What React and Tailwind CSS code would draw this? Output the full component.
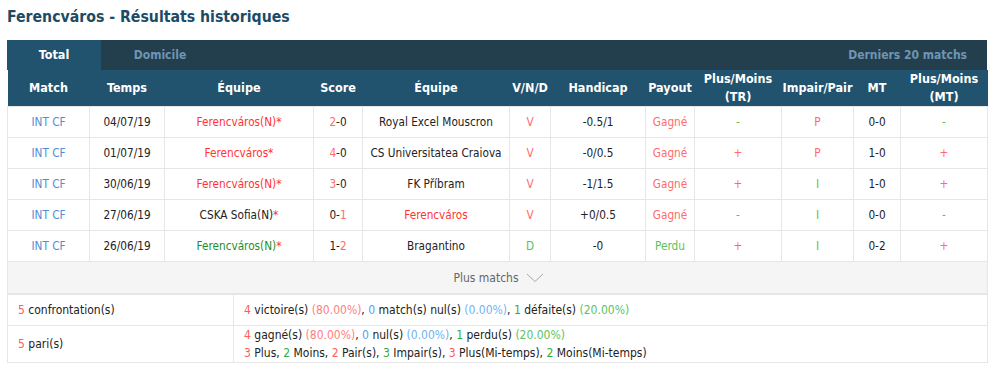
import React from "react";

const R = "text-[#ff3333]";
const RL = "text-[#ff6b6b]";
const G = "text-[#5cc15c]";
const GD = "text-[#1f8f1f]";
const B = "text-[#4f8fd8]";

const cols = [82, 75, 149, 49, 147, 41, 95, 49, 87, 72, 47, 87];

const rows = [
  {
    date: "04/07/19",
    home: <span className={R}>Ferencváros(N)*</span>,
    score: <><span className={RL}>2</span>-0</>,
    away: <span>Royal Excel Mouscron</span>,
    res: <span className={RL}>V</span>,
    hc: "-0.5/1",
    pay: <span className={RL}>Gagné</span>,
    ou: <span className={G}>-</span>,
    op: <span className={RL}>P</span>,
    mt: "0-0",
    oumt: <span className={G}>-</span>,
  },
  {
    date: "01/07/19",
    home: <span className={R}>Ferencváros*</span>,
    score: <><span className={RL}>4</span>-0</>,
    away: <span>CS Universitatea Craiova</span>,
    res: <span className={RL}>V</span>,
    hc: "-0/0.5",
    pay: <span className={RL}>Gagné</span>,
    ou: <span className={RL}>+</span>,
    op: <span className={RL}>P</span>,
    mt: "1-0",
    oumt: <span className={RL}>+</span>,
  },
  {
    date: "30/06/19",
    home: <span className={R}>Ferencváros(N)*</span>,
    score: <><span className={RL}>3</span>-0</>,
    away: <span>FK Příbram</span>,
    res: <span className={RL}>V</span>,
    hc: "-1/1.5",
    pay: <span className={RL}>Gagné</span>,
    ou: <span className={RL}>+</span>,
    op: <span className={G}>I</span>,
    mt: "1-0",
    oumt: <span className={RL}>+</span>,
  },
  {
    date: "27/06/19",
    home: <span>CSKA Sofia(N)<span className={R}>*</span></span>,
    score: <>0-<span className={RL}>1</span></>,
    away: <span className={R}>Ferencváros</span>,
    res: <span className={RL}>V</span>,
    hc: "+0/0.5",
    pay: <span className={RL}>Gagné</span>,
    ou: <span className={G}>-</span>,
    op: <span className={G}>I</span>,
    mt: "0-0",
    oumt: <span className={G}>-</span>,
  },
  {
    date: "26/06/19",
    home: <span className={GD}>Ferencváros(N)<span className={R}>*</span></span>,
    score: <>1-<span className={RL}>2</span></>,
    away: <span>Bragantino</span>,
    res: <span className={G}>D</span>,
    hc: "-0",
    pay: <span className={G}>Perdu</span>,
    ou: <span className={RL}>+</span>,
    op: <span className={G}>I</span>,
    mt: "0-2",
    oumt: <span className={RL}>+</span>,
  },
];

const headers = [
  "Match",
  "Temps",
  "Équipe",
  "Score",
  "Équipe",
  "V/N/D",
  "Handicap",
  "Payout",
  <>Plus/Moins<br />(TR)</>,
  "Impair/Pair",
  "MT",
  <>Plus/Moins<br />(MT)</>,
];

export default function App() {
  return (
    <div
      className="w-[995px] h-[371px] bg-white text-[#222] overflow-hidden"
      style={{ fontFamily: "'DejaVu Sans Condensed', 'DejaVu Sans', sans-serif" }}
    >
      <div className="h-[40px] pl-[7px] pt-[6px]">
        <h1 className="text-[15.7px] font-bold text-[#1c4b66] leading-[22px]">
          Ferencváros - Résultats historiques
        </h1>
      </div>
      <div className="mx-[7px] w-[980px]">
        <div className="flex h-[30px] bg-[#233f4e] text-[12px] font-bold items-center">
          <div className="w-[94px] h-full bg-[#22536e] text-white text-[12.5px] flex items-center justify-center">
            Total
          </div>
          <div className="w-[118px] h-full text-[#6e95b2] flex items-center justify-center">
            Domicile
          </div>
          <div className="flex-1" />
          <div className="pr-[20px] text-[#6e95b2]">Derniers 20 matchs</div>
        </div>
        <table className="table-fixed border-collapse w-[980px] text-[11.7px]">
          <colgroup>
            {cols.map((w, i) => (
              <col key={i} style={{ width: w }} />
            ))}
          </colgroup>
          <thead>
            <tr className="h-[36px] bg-[#22536e] text-white">
              {headers.map((h, i) => (
                <th key={i} className="font-bold text-[12.5px] leading-[18px] text-center p-0 whitespace-nowrap">
                  {h}
                </th>
              ))}
            </tr>
          </thead>
          <tbody>
            {rows.map((r, i) => (
              <tr key={i} className="h-[31px] text-center">
                {[
                  <span className={B}>INT CF</span>,
                  r.date,
                  r.home,
                  r.score,
                  r.away,
                  r.res,
                  r.hc,
                  r.pay,
                  r.ou,
                  r.op,
                  r.mt,
                  r.oumt,
                ].map((c, j) => (
                  <td key={j} className="border border-[#e6e6e6] p-0 pt-[1px] whitespace-nowrap">
                    {c}
                  </td>
                ))}
              </tr>
            ))}
            <tr className="h-[32px] bg-[#f5f5f5]">
              <td colSpan={12} className="border border-[#e6e6e6] text-center text-[#666] p-0 text-[12px]">
                <span className="inline-flex items-center gap-[7px] pl-[2px]">
                  Plus matchs
                  <svg width="18" height="10" viewBox="0 0 18 10">
                    <path d="M1 1 L9 8.5 L17 1" fill="none" stroke="#aaa" strokeWidth="1" />
                  </svg>
                </span>
              </td>
            </tr>
          </tbody>
        </table>
        <table className="table-fixed border-collapse w-[980px] text-[12px]">
          <colgroup>
            <col style={{ width: 226 }} />
            <col style={{ width: 754 }} />
          </colgroup>
          <tbody>
            <tr className="h-[31px]">
              <td className="border border-[#e6e6e6] pl-[10px]">
                <span className="text-[#ff5c5c]">5</span> confrontation(s)
              </td>
              <td className="border border-[#e6e6e6] pl-[10px]">
                <span className="text-[#ff5c5c]">4</span> victoire(s){" "}
                <span className="text-[#ff8080]">(80.00%)</span>,{" "}
                <span className="text-[#4da3f5]">0</span> match(s) nul(s){" "}
                <span className="text-[#6fb3f5]">(0.00%)</span>,{" "}
                <span className="text-[#2fae3a]">1</span> défaite(s){" "}
                <span className="text-[#5cc45c]">(20.00%)</span>
              </td>
            </tr>
            <tr className="h-[37px]">
              <td className="border border-[#e6e6e6] pl-[10px]">
                <span className="text-[#ff5c5c]">5</span> pari(s)
              </td>
              <td className="border border-[#e6e6e6] pl-[10px] leading-[18px]">
                <div>
                  <span className="text-[#ff5c5c]">4</span> gagné(s){" "}
                  <span className="text-[#ff8080]">(80.00%)</span>,{" "}
                  <span className="text-[#4da3f5]">0</span> nul(s){" "}
                  <span className="text-[#6fb3f5]">(0.00%)</span>,{" "}
                  <span className="text-[#2fae3a]">1</span> perdu(s){" "}
                  <span className="text-[#5cc45c]">(20.00%)</span>
                </div>
                <div>
                  <span className="text-[#ff5c5c]">3</span> Plus,{" "}
                  <span className="text-[#2fae3a]">2</span> Moins,{" "}
                  <span className="text-[#ff5c5c]">2</span> Pair(s),{" "}
                  <span className="text-[#2fae3a]">3</span> Impair(s),{" "}
                  <span className="text-[#ff5c5c]">3</span> Plus(Mi-temps),{" "}
                  <span className="text-[#2fae3a]">2</span> Moins(Mi-temps)
                </div>
              </td>
            </tr>
          </tbody>
        </table>
      </div>
    </div>
  );
}
